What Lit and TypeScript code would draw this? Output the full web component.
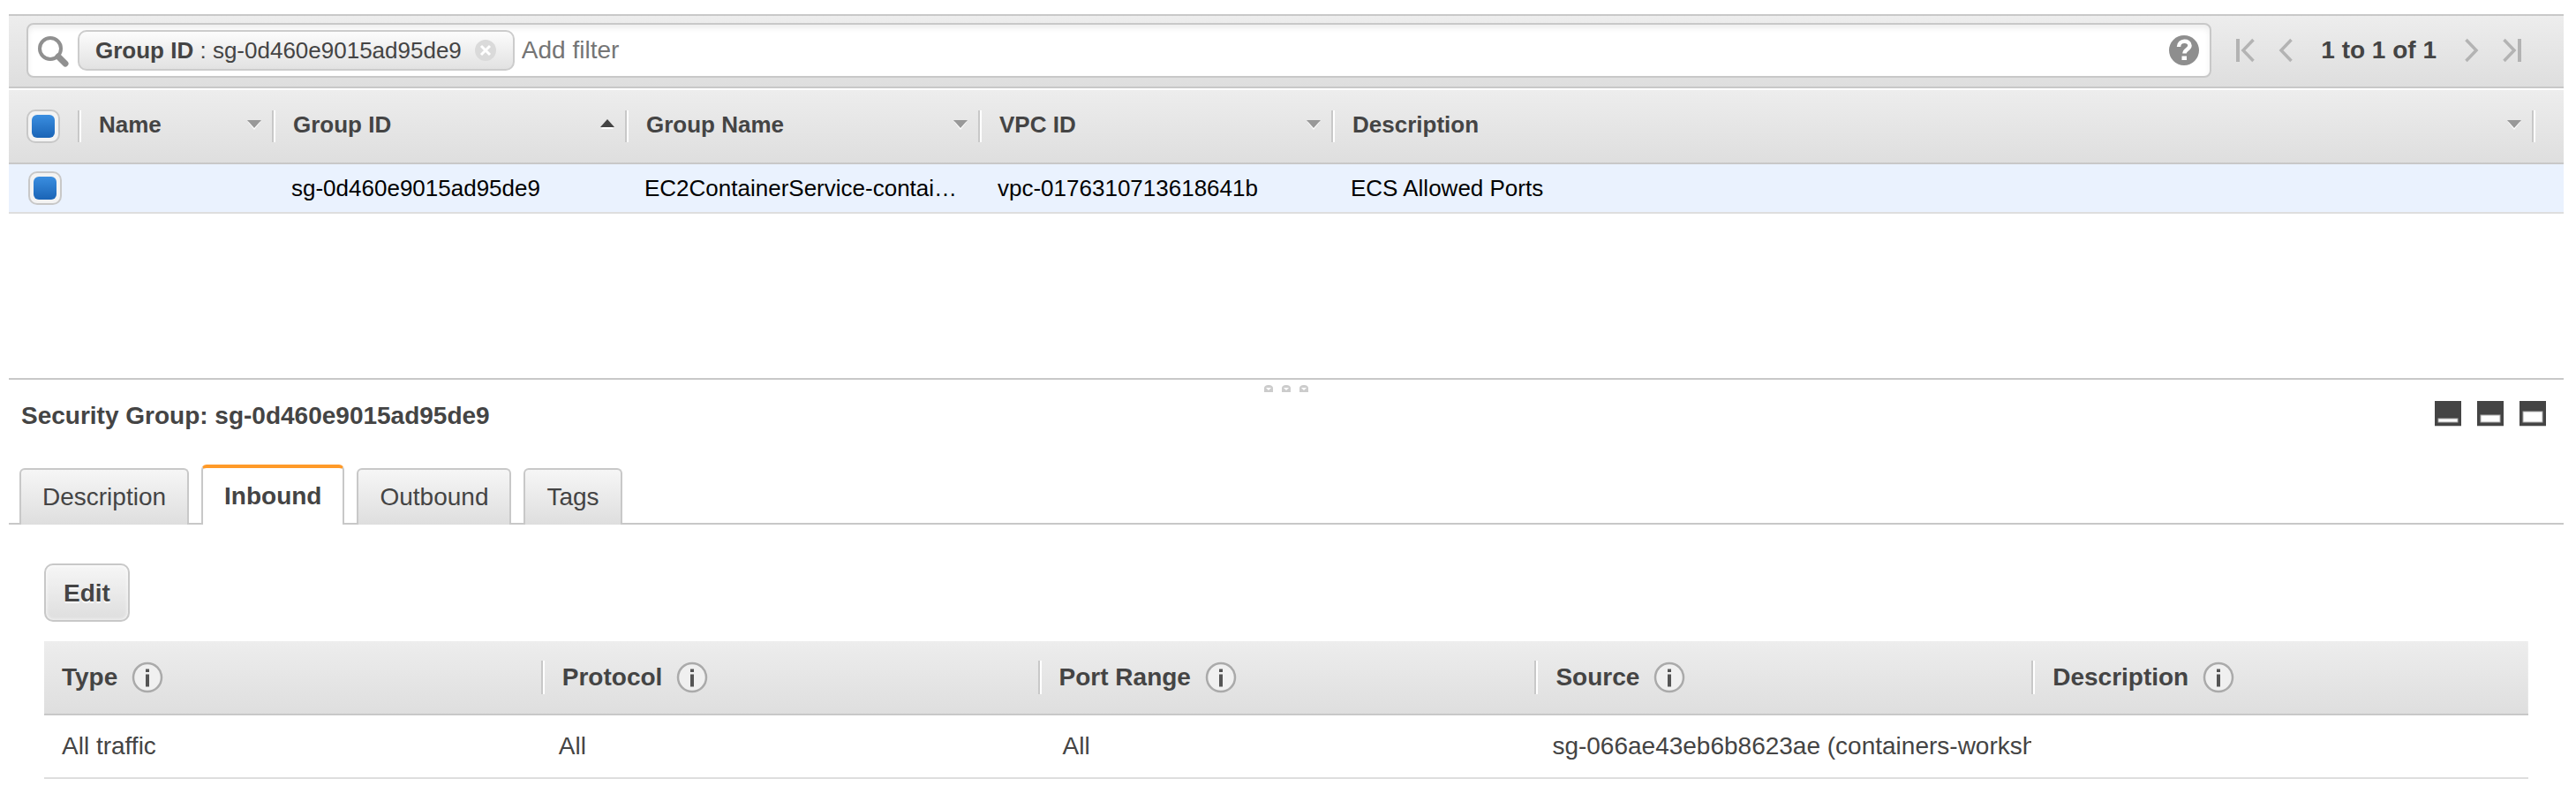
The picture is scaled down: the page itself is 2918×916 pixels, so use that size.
import { LitElement, html, css, svg } from "lit";
import { customElement, state } from "lit/decorators.js";

const SANS = css`"Helvetica Neue", "Liberation Sans", Arial, sans-serif`;

interface Column {
  key: string;
  label: string;
  sort?: "asc" | "none";
}

const GROUP_COLUMNS: Column[] = [
  { key: "name", label: "Name" },
  { key: "id", label: "Group ID", sort: "asc" },
  { key: "group", label: "Group Name" },
  { key: "vpc", label: "VPC ID" },
  { key: "desc", label: "Description" },
];

const GROUPS: Record<string, string>[] = [
  {
    name: "",
    id: "sg-0d460e9015ad95de9",
    group: "EC2ContainerService-contai…",
    vpc: "vpc-0176310713618641b",
    desc: "ECS Allowed Ports",
  },
];

const RULE_COLUMNS: Column[] = [
  { key: "type", label: "Type" },
  { key: "protocol", label: "Protocol" },
  { key: "port", label: "Port Range" },
  { key: "source", label: "Source" },
  { key: "note", label: "Description" },
];

const RULES: Record<string, string>[] = [
  {
    type: "All traffic",
    protocol: "All",
    port: "All",
    source: "sg-066ae43eb6b8623ae (containers-worksh",
    note: "",
  },
];

const TABS = ["Description", "Inbound", "Outbound", "Tags"];

@customElement("filter-bar")
class FilterBar extends LitElement {
  static styles = css`
    :host {
      display: flex;
      align-items: center;
      padding: 8px 46px 10px 20px;
      border-top: 2px solid #c8c8c8;
      border-bottom: 2px solid #c8c8c8;
      background: linear-gradient(#ededed, #dedede);
      font: 28px/34px ${SANS};
      color: #444;
    }
    button {
      appearance: none;
      border: 0;
      padding: 0;
      background: none;
      display: flex;
      cursor: pointer;
    }
    .search {
      flex: 1;
      display: flex;
      align-items: center;
      box-sizing: border-box;
      height: 62px;
      padding: 0 12px 0 10px;
      border: 2px solid #c8c8c8;
      border-radius: 8px;
      background: #fff;
      box-shadow: inset 0 4px 6px #eee;
    }
    .search svg {
      flex: none;
    }
    .chip {
      display: flex;
      align-items: center;
      box-sizing: border-box;
      height: 46px;
      margin: 0 8px;
      padding: 0 18px;
      border: 2px solid #ccc;
      border-radius: 10px;
      background: linear-gradient(#fcfcfc, #e2e2e2);
      font-size: 26px;
      white-space: pre;
    }
    .chip button {
      margin-left: 14px;
    }
    input {
      flex: 1;
      min-width: 0;
      padding: 0;
      border: 0;
      outline: 0;
      background: none;
      font: inherit;
      color: #444;
    }
    input::placeholder {
      color: #757575;
      opacity: 1;
    }
    .pager {
      display: flex;
      align-items: center;
      margin-left: 26px;
      font-weight: bold;
    }
    .pager span {
      margin: 0 32px;
      white-space: nowrap;
    }
    .pager .gap {
      margin-left: 26px;
    }
  `;

  render() {
    return html`
      <div class="search">
        <svg width="38" height="38" viewBox="0 0 38 38" aria-hidden="true">
          <circle cx="15" cy="17" r="12" fill="none" stroke="#909090" stroke-width="4" />
          <path d="M24 26l8 8" stroke="#909090" stroke-width="7" stroke-linecap="round" />
        </svg>
        <div class="chip"><b>Group ID</b> : sg-0d460e9015ad95de9<button aria-label="Remove filter">
            <svg width="26" height="26" viewBox="0 0 26 26">
              <circle cx="13" cy="13" r="12" fill="#dadada" />
              <path d="M8 8l10 10M18 8L8 18" stroke="#fff" stroke-width="3" />
            </svg></button></div>
        <input aria-label="Add filter" placeholder="Add filter" />
        <button aria-label="Help">
          <svg width="34" height="34" viewBox="0 0 34 34">
            <circle cx="17" cy="17" r="17" fill="#8e8e8e" />
            <path d="M11 13c0-8 12.500-8 12.500-1.500 0 4.500-6 4.500-6 9" fill="none" stroke="#fff" stroke-width="4.500" />
            <rect x="14.500" y="23.500" width="5.500" height="4.500" fill="#fff" />
          </svg>
        </button>
      </div>
      <nav class="pager" aria-label="Pages">
        <button aria-label="First page">
          <svg width="24" height="28" viewBox="0 0 24 28" fill="none" stroke="#b3b3b3">
            <path d="M4 1v26" stroke-width="4" />
            <path d="M21.500 2L10 14l11.500 12" stroke-width="3.500" />
          </svg>
        </button>
        <button class="gap" aria-label="Previous page">
          <svg width="16" height="28" viewBox="0 0 16 28" fill="none" stroke="#b3b3b3">
            <path d="M14.500 2L3 14l11.500 12" stroke-width="3.500" />
          </svg>
        </button>
        <span>1 to 1 of 1</span>
        <button aria-label="Next page">
          <svg width="16" height="28" viewBox="0 0 16 28" fill="none" stroke="#b3b3b3">
            <path d="M1.500 2L13 14L1.500 26" stroke-width="3.500" />
          </svg>
        </button>
        <button class="gap" aria-label="Last page">
          <svg width="24" height="28" viewBox="0 0 24 28" fill="none" stroke="#b3b3b3">
            <path d="M20 1v26" stroke-width="4" />
            <path d="M2.500 2L14 14L2.500 26" stroke-width="3.500" />
          </svg>
        </button>
      </nav>
    `;
  }
}

@customElement("group-table")
class GroupTable extends LitElement {
  static styles = css`
    :host {
      display: block;
      padding-top: 2px;
      font: 26px/30px ${SANS};
    }
    table {
      width: 100%;
      table-layout: fixed;
      border-spacing: 0;
      border-collapse: separate;
    }
    th,
    td {
      padding: 0;
      text-align: left;
      overflow: hidden;
      white-space: nowrap;
      text-overflow: ellipsis;
    }
    thead tr {
      background: linear-gradient(#ededed, #dedede);
    }
    th {
      height: 82px;
      border-bottom: 2px solid #c8c8c8;
      color: #444;
    }
    td {
      height: 54px;
      padding: 0 16px 0 18px;
      border-bottom: 2px solid #dedede;
      background: #eaf2fe;
      color: #000;
    }
    td.pick {
      padding: 0 0 0 22px;
    }
    .pick {
      width: 82px;
    }
    .name {
      width: 220px;
    }
    .id,
    .group,
    .vpc {
      width: 400px;
    }
    .end {
      width: 32px;
    }
    .head {
      display: flex;
      align-items: center;
      box-sizing: border-box;
      height: 36px;
      padding: 0 16px 0 20px;
      background: linear-gradient(to right, #c8c8c8 2px, #fff 2px) right / 4px 100% no-repeat;
    }
    .head button {
      flex: 1;
      display: flex;
      align-items: center;
      justify-content: space-between;
      padding: 0 0 4px;
      border: 0;
      background: none;
      font: inherit;
      color: inherit;
      cursor: pointer;
    }
    input {
      appearance: none;
      display: block;
      box-sizing: border-box;
      flex: none;
      width: 38px;
      height: 38px;
      margin: 0;
      padding: 4px;
      border: 2px solid #c8c8c8;
      border-radius: 10px;
      background: #f3f3f3;
    }
    input:checked::before {
      content: "";
      display: block;
      height: 26px;
      border-radius: 6px;
      background: linear-gradient(#3a8ee0, #1a64b6);
    }
  `;

  render() {
    return html`
      <table>
        <thead>
          <tr>
            <th class="pick">
              <div class="head"><input type="checkbox" checked aria-label="Select all groups" /></div>
            </th>
            ${GROUP_COLUMNS.map(
              (c) => html`<th class=${c.key} aria-sort=${c.sort === "asc" ? "ascending" : "none"}>
                <div class="head">
                  <button>
                    ${c.label}
                    <svg width="16" height="12" viewBox="0 0 16 12" aria-hidden="true">
                      ${c.sort === "asc"
                        ? svg`<path d="M1 11h14L8 3z" fill="#fff" /><path d="M0 9h16L8 0z" fill="#444" />`
                        : svg`<path d="M1 3h14L8 12z" fill="#fff" /><path d="M0 1h16L8 10z" fill="#999" />`}
                    </svg>
                  </button>
                </div>
              </th>`
            )}
            <th class="end"></th>
          </tr>
        </thead>
        <tbody>
          ${GROUPS.map(
            (g) => html`<tr>
              <td class="pick"><input type="checkbox" checked aria-label="Select ${g.id}" /></td>
              ${GROUP_COLUMNS.map((c) => html`<td>${g[c.key]}</td>`)}
              <td></td>
            </tr>`
          )}
        </tbody>
      </table>
    `;
  }
}

@customElement("rule-table")
class RuleTable extends LitElement {
  static styles = css`
    :host {
      display: block;
      font: 28px/34px ${SANS};
      color: #444;
    }
    table {
      width: 100%;
      table-layout: fixed;
      border-spacing: 0;
    }
    th,
    td {
      padding: 0;
      text-align: left;
      white-space: nowrap;
      overflow: hidden;
    }
    thead tr {
      background: linear-gradient(#ededed, #dedede);
    }
    th {
      height: 82px;
      border-bottom: 2px solid #c8c8c8;
    }
    td {
      height: 70px;
      padding-left: 20px;
      border-bottom: 2px solid #dedede;
    }
    td.port {
      padding-left: 28px;
    }
    .head {
      display: flex;
      align-items: center;
      gap: 16px;
      height: 38px;
      padding-left: 20px;
    }
    th + th .head {
      padding-left: 24px;
      background: linear-gradient(to right, #c8c8c8 2px, #fff 2px) left / 4px 100% no-repeat;
    }
    button {
      display: flex;
      padding: 0;
      border: 0;
      background: none;
      cursor: pointer;
    }
  `;

  render() {
    return html`
      <table>
        <thead>
          <tr>
            ${RULE_COLUMNS.map(
              (c) => html`<th>
                <div class="head">
                  ${c.label}
                  <button aria-label="About ${c.label}">
                    <svg width="36" height="36" viewBox="0 0 36 36">
                      <circle cx="18" cy="18" r="16" fill="#f0f0f0" stroke="#aaa" stroke-width="2.500" />
                      <path d="M18 14.500v14" stroke="#555" stroke-width="4" />
                      <path d="M18 8.500v3.500" stroke="#555" stroke-width="4" />
                    </svg>
                  </button>
                </div>
              </th>`
            )}
          </tr>
        </thead>
        <tbody>
          ${RULES.map(
            (r) => html`<tr>
              ${RULE_COLUMNS.map((c) => html`<td class=${c.key}>${r[c.key]}</td>`)}
            </tr>`
          )}
        </tbody>
      </table>
    `;
  }
}

@customElement("app-root")
class AppRoot extends LitElement {
  @state() private tab = "Inbound";

  static styles = css`
    :host {
      display: block;
      box-sizing: border-box;
      min-height: 100vh;
      padding: 16px 14px 32px 10px;
      background: #fff;
      font: 28px/34px ${SANS};
      color: #444;
    }
    .list {
      min-height: 412px;
    }
    .detail {
      border-top: 2px solid #c8c8c8;
    }
    .grip {
      display: flex;
      justify-content: center;
      gap: 10px;
      padding: 6px 0 8px;
    }
    .grip svg {
      display: block;
    }
    .title {
      display: flex;
      align-items: flex-start;
      justify-content: space-between;
      padding: 0 20px 0 14px;
    }
    h2 {
      margin: 0;
      font-size: 28px;
      line-height: 38px;
    }
    .panes {
      display: flex;
      gap: 18px;
      padding-top: 2px;
    }
    .panes button {
      display: flex;
      padding: 0;
      border: 0;
      background: none;
      cursor: pointer;
    }
    .tabs {
      display: flex;
      align-items: flex-end;
      gap: 14px;
      margin-top: 36px;
      padding: 0 12px;
      background: linear-gradient(#c8c8c8, #c8c8c8) bottom / 100% 2px no-repeat;
    }
    .tab {
      height: 64px;
      padding: 0 24px;
      border: 2px solid #c8c8c8;
      border-bottom: 0;
      border-radius: 6px 6px 0 0;
      background: linear-gradient(#f6f6f6, #dedede);
      font: inherit;
      color: inherit;
      cursor: pointer;
    }
    .tab.on {
      height: 68px;
      border-top: 4px solid #ff9a28;
      background: #fff;
      font-weight: bold;
    }
    .panel {
      display: flex;
      flex-direction: column;
      align-items: flex-start;
      gap: 22px;
      padding: 44px 40px 0;
    }
    .edit {
      height: 66px;
      padding: 2px 20px 0;
      border: 2px solid #c8c8c8;
      border-radius: 10px;
      background: linear-gradient(#f6f6f6, #dedede);
      box-shadow: inset 0 0 4px #fff;
      font: inherit;
      font-weight: bold;
      color: inherit;
      text-shadow: 0 2px #fff;
      cursor: pointer;
    }
    rule-table {
      width: 100%;
    }
  `;

  private pane(top: number, label: string) {
    return html`<button aria-label=${label}>
      <svg width="30" height="29" viewBox="0 0 30 29">
        <rect width="30" height="28" fill="#444" />
        <rect y="28" width="30" height="1" fill="#ccc" />
        <rect x="4" y=${top} width="22" height=${24 - top} fill="#fff" stroke="#aaa" stroke-width="1" />
      </svg>
    </button>`;
  }

  render() {
    return html`
      <div class="list">
        <filter-bar></filter-bar>
        <group-table></group-table>
      </div>
      <section class="detail">
        <div class="grip">
          ${[0, 1, 2].map(
            () => html`<svg width="10" height="8" viewBox="0 0 10 8" aria-hidden="true">
              <path d="M0 8V4C0 1 2 0 5 0s5 1 5 4v4z" fill="#ccc" />
              <path d="M2 3h6L5 6z" fill="#fff" />
            </svg>`
          )}
        </div>
        <div class="title">
          <h2>Security Group: sg-0d460e9015ad95de9</h2>
          <div class="panes">
            ${this.pane(20, "Minimise details")} ${this.pane(16, "Split view")}
            ${this.pane(12, "Maximise details")}
          </div>
        </div>
        <div class="tabs" role="tablist">
          ${TABS.map(
            (t) => html`<button
              class="tab ${t === this.tab ? "on" : ""}"
              role="tab"
              aria-selected=${t === this.tab}
              @click=${() => (this.tab = t)}
            >
              ${t}
            </button>`
          )}
        </div>
        <div class="panel">
          <button class="edit">Edit</button>
          <rule-table></rule-table>
        </div>
      </section>
    `;
  }
}
